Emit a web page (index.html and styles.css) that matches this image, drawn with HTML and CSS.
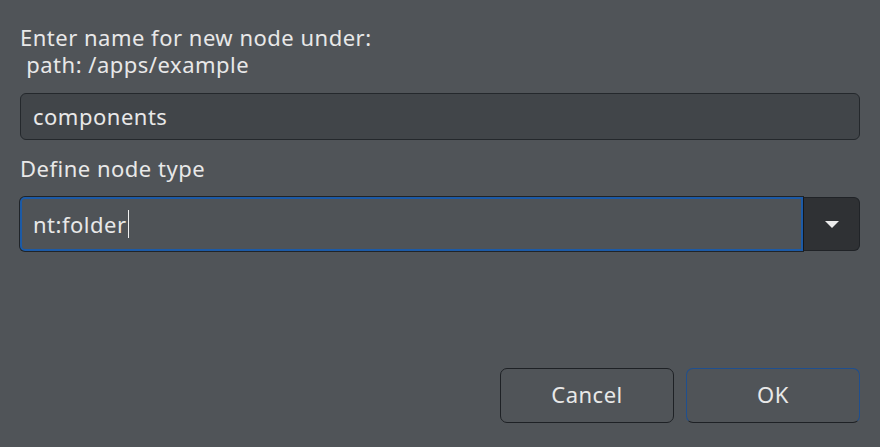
FILE: index.html
```html
<!DOCTYPE html>
<html>
<head>
<meta charset="utf-8">
<link rel="stylesheet" href="styles.css">
</head>
<body>
<div class="dialog">
  <div class="prompt">Enter name for new node under:<br>&nbsp;path: /apps/example</div>
  <div class="field name-field">components</div>
  <div class="label">Define node type</div>
  <div class="combo">
    <div class="combo-input">nt:folder<span class="caret"></span></div>
    <div class="combo-btn"><span class="tri"></span></div>
  </div>
  <div class="spacer"></div>
  <div class="buttons">
    <div class="btn cancel">Cancel</div>
    <div class="btn ok">OK</div>
  </div>
</div>
</body>
</html>
```
FILE: styles.css
```css
html, body {
  margin: 0;
  padding: 0;
  background: #505458;
  width: 880px;
  height: 447px;
  overflow: hidden;
}
.dialog {
  box-sizing: border-box;
  width: 880px;
  height: 447px;
  padding: 24px 20px 24px 20px;
  display: flex;
  flex-direction: column;
  font-family: "Noto Sans", "Open Sans", sans-serif;
  font-size: 22px;
  letter-spacing: 0.5px;
  color: #e8e8e8;
}
.prompt {
  line-height: 27px;
}
.field {
  box-sizing: border-box;
  margin-top: 15px;
  height: 47px;
  border: 1px solid #24282c;
  border-radius: 6px;
  background: #414549;
  padding: 0 12px 2px 12px;
  display: flex;
  align-items: center;
}
.label {
  margin-top: 15px;
  line-height: 27px;
}
.combo {
  margin-top: 15px;
  height: 54px;
  display: flex;
}
.combo-input {
  box-sizing: border-box;
  flex: 1;
  border: 2px solid #1c5aa6;
  box-shadow: 0 0 0 1px #202428;
  border-radius: 5px 0 0 5px;
  background: #4f5357;
  padding: 0 11px 1px 11px;
  display: flex;
  align-items: center;
}
.caret {
  display: inline-block;
  width: 0;
  height: 28px;
  border-left: 1.5px solid #f0f0f0;
  margin-left: 1px;
}
.combo-btn {
  box-sizing: border-box;
  width: 57px;
  background: #2f3134;
  border: 1px solid #202327;
  border-left: 1px solid #15171a;
  border-radius: 0 6px 6px 0;
  display: flex;
  align-items: center;
  justify-content: center;
}
.tri {
  width: 0;
  height: 0;
  border-left: 7px solid transparent;
  border-right: 7px solid transparent;
  border-top: 7px solid #ececec;
}
.spacer {
  flex: 1;
}
.buttons {
  display: flex;
  justify-content: flex-end;
  gap: 12px;
}
.btn {
  box-sizing: border-box;
  width: 174px;
  height: 55px;
  border-radius: 7px;
  display: flex;
  align-items: center;
  justify-content: center;
  background: #505458;
  padding-bottom: 3px;
}
.cancel {
  border: 1px solid #1e2125;
}
.ok {
  border: 1px solid #1f4f8f;
  border-bottom-color: #1e2125;
  border-right-color: #1f4f8f;
}
```
